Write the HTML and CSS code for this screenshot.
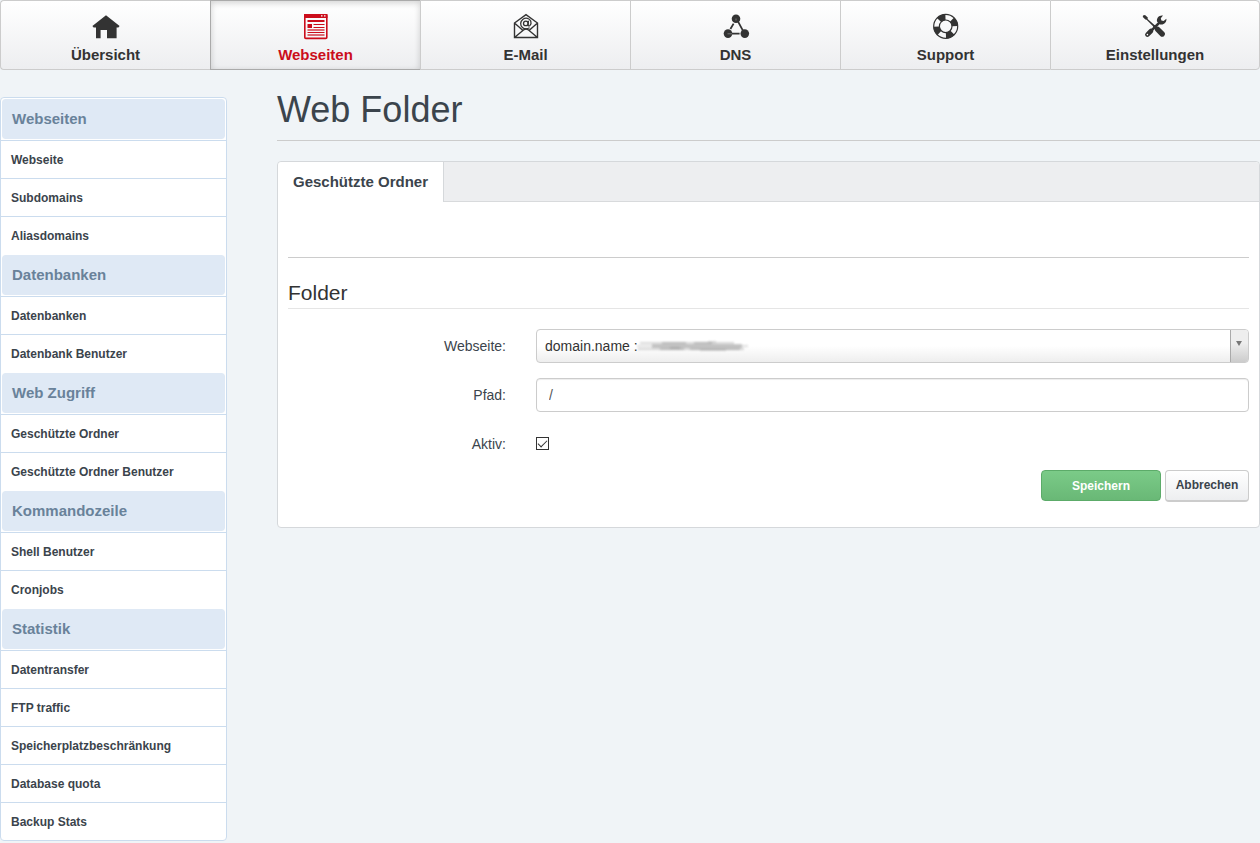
FILE: index.html
```html
<!DOCTYPE html>
<html lang="de">
<head>
    <meta charset="UTF-8">
    <meta name="viewport" content="width=device-width, initial-scale=1.0">
    <title>Web Folder</title>
    <link rel="stylesheet" href="styles.css">
</head>
<body>
    <!-- Main navigation -->
    <nav class="main-nav">
        <a class="nav-item" href="#">
            <svg class="icon" viewBox="0 0 28 28"><path fill="currentColor" d="M14 3.2 27.6 14 26.4 15.4H24.6V26.3H15V18H8.6V26.3H4V15.4H1.6L.4 14Z"/></svg>
            <span>Übersicht</span>
        </a>
        <a class="nav-item active" href="#">
            <svg class="icon" viewBox="0 0 28 28">
                <rect x="2.8" y="2.8" width="22" height="23.6" rx="1" fill="none" stroke="currentColor" stroke-width="1.6"/>
                <path fill="currentColor" d="M2 2H25.5V6H2ZM5.5 8H22.5V10H5.5ZM5.5 12H10V16H5.5ZM11.5 12H22.5V13H11.5ZM11.5 15H22.5V16H11.5ZM5.5 20H22.5V21H5.5Z"/>
                <path fill="currentColor" opacity=".6" d="M5.5 17H22.5V19H5.5ZM5.5 22H22.5V24H5.5Z"/>
                <path fill="#fff" d="M19 3.2H20.5V4.6H19ZM22 3.2H23.5V4.6H22Z"/>
            </svg>
            <span>Webseiten</span>
        </a>
        <a class="nav-item" href="#">
            <svg class="icon" viewBox="0 0 28 28" fill="none" stroke="currentColor">
                <path stroke-width="1.4" d="M2.5 11 14 2.6 25.5 11V25.5H2.5ZM2.5 11 11 18.5M25.5 11 17 18.5M2.5 25.5 11.5 18Q14 16 16.5 18L25.5 25.5"/>
                <circle cx="13.8" cy="11.4" r="2.3" stroke-width="1.3"/>
                <path stroke-width="1.3" d="M16.4 8.8 16 13Q16.4 14.6 18 13.4 19.6 11.8 18.8 9.2C17.6 6 13.6 5.4 11 7.2 8 9.4 8 13.4 10.4 15.4 12.6 17.2 15.6 16.9 17.6 15.8"/>
            </svg>
            <span>E-Mail</span>
        </a>
        <a class="nav-item" href="#">
            <svg class="icon" viewBox="0 0 28 28" fill="currentColor">
                <circle cx="14" cy="6.8" r="4.3"/>
                <circle cx="6" cy="21.6" r="4.3"/>
                <circle cx="22.8" cy="21.6" r="4.3"/>
                <path fill="none" stroke="currentColor" stroke-width="1.8" d="M11.6 11.6 8.4 17M15 7.6 20.8 18.4M8 21.6H17.6"/>
                <path fill="none" stroke="#888" stroke-width=".8" d="M5.5 21.8H10M14 6.5V8.5"/>
            </svg>
            <span>DNS</span>
        </a>
        <a class="nav-item" href="#">
            <svg class="icon" viewBox="0 0 28 28" fill="none" stroke="currentColor">
                <circle cx="13.7" cy="14.3" r="12" stroke-width="1.2"/>
                <circle cx="13.7" cy="14.3" r="6.3" stroke-width="1.2"/>
                <circle cx="13.7" cy="14.3" r="9.2" stroke-width="6" pathLength="80" stroke-dasharray="10 10" stroke-dashoffset="5" transform="rotate(-24 13.7 14.3)"/>
            </svg>
            <span>Support</span>
        </a>
        <a class="nav-item" href="#">
            <svg class="icon" viewBox="0 0 28 28" fill="none" stroke="currentColor" stroke-linecap="round">
                <path fill="currentColor" stroke="none" d="M2 3.4 4 3 6.8 5.6 6.6 7 14 13.6 12.8 15 5.6 7.8 4.4 7.6 1.8 5Z"/>
                <path stroke-width="5.4" d="M16.6 17.4 21.2 22"/>
                <path stroke-width="2.6" d="M13.4 14.4 16 17"/>
                <path stroke-width="4.6" d="M6.4 22.6 10 19"/>
                <path stroke-width="2.6" stroke-linecap="butt" d="M9.6 19.4 19.4 9.6"/>
                <path fill="currentColor" stroke="none" d="M16 9.6C15.4 6 18 3 22 3.6L19.8 6.2 20.4 8.4 22.6 9 25.4 6.8C25.8 10.6 22.8 13.2 19 12.4Z"/>
                <circle cx="6.4" cy="22.6" r=".8" fill="#fff" stroke="none"/>
            </svg>
            <span>Einstellungen</span>
        </a>
    </nav>

    <div class="content">
        <!-- Sidebar -->
        <aside class="sidebar">
            <h2>Webseiten</h2>
            <ul>
                <li><a href="#">Webseite</a></li>
                <li><a href="#">Subdomains</a></li>
                <li><a href="#">Aliasdomains</a></li>
            </ul>
            <h2>Datenbanken</h2>
            <ul>
                <li><a href="#">Datenbanken</a></li>
                <li><a href="#">Datenbank Benutzer</a></li>
            </ul>
            <h2>Web Zugriff</h2>
            <ul>
                <li><a href="#">Geschützte Ordner</a></li>
                <li><a href="#">Geschützte Ordner Benutzer</a></li>
            </ul>
            <h2>Kommandozeile</h2>
            <ul>
                <li><a href="#">Shell Benutzer</a></li>
                <li><a href="#">Cronjobs</a></li>
            </ul>
            <h2>Statistik</h2>
            <ul>
                <li><a href="#">Datentransfer</a></li>
                <li><a href="#">FTP traffic</a></li>
                <li><a href="#">Speicherplatzbeschränkung</a></li>
                <li><a href="#">Database quota</a></li>
                <li><a href="#">Backup Stats</a></li>
            </ul>
        </aside>

        <!-- Page -->
        <main class="page">
            <h1>Web Folder</h1>
            <div class="panel">
                <div class="tabs">
                    <a class="tab" href="#">Geschützte Ordner</a>
                </div>
                <form class="form">
                    <h3>Folder</h3>
                    <div class="form-row">
                        <label for="website">Webseite:</label>
                        <div class="select">
                            <select id="website">
                                <option>domain.name :</option>
                            </select>
                            <svg class="smudge" viewBox="0 0 112 14" fill="none" stroke="#666">
                                <path opacity=".25" stroke-width="2" d="M4 4H98M2 10H108"/>
                                <path opacity=".3" stroke-width="4" d="M16 7H106"/>
                                <path opacity=".3" stroke-width="2" d="M26 4H50M58 4H76M24 10H48M54 10H104"/>
                                <path opacity=".4" d="M1 7H112M34 9H44M64 11H90M72 3H80"/>
                            </svg>
                        </div>
                    </div>
                    <div class="form-row">
                        <label for="path">Pfad:</label>
                        <input class="text-input" type="text" id="path" value="/">
                    </div>
                    <div class="form-row">
                        <label for="enabled">Aktiv:</label>
                        <input class="checkbox" type="checkbox" id="enabled" checked>
                    </div>
                    <div class="buttons">
                        <button class="button save" type="button">Speichern</button>
                        <button class="button cancel" type="button">Abbrechen</button>
                    </div>
                </form>
            </div>
        </main>
    </div>
</body>
</html>
```
FILE: styles.css
```css
*, *::before, *::after { margin: 0; padding: 0; box-sizing: border-box; }
body {
    font-family: "Liberation Sans", Arial, sans-serif;
    font-size: 14px;
    line-height: 20px;
    color: #3b444c;
    background: #f0f4f7;
}
a { color: inherit; text-decoration: none; }
ul { list-style: none; }

/* Main navigation */
.main-nav { display: grid; grid-template-columns: repeat(6, 1fr); }
.nav-item {
    display: flex;
    flex-direction: column;
    align-items: center;
    gap: 5px;
    padding: 11px 0 4px;
    border: 1px solid #ccc;
    border-right: none;
    background: linear-gradient(to bottom, #fff, #edeef0);
    color: #333;
    font-size: 15px;
    font-weight: bold;
}
.nav-item:first-child { border-radius: 4px 0 0 4px; }
.nav-item:last-child { border-right: 1px solid #ccc; border-radius: 0 4px 4px 0; }
.nav-item.active {
    color: #cb0d1b;
    border-color: #aaa;
    box-shadow: inset 0 2px 6px rgba(0,0,0,0.18);
}
.icon { width: 28px; height: 28px; }

.content { display: flex; align-items: flex-start; gap: 50px; }

/* Sidebar */
.sidebar {
    flex: 0 0 227px;
    margin-top: 27px;
    background: #fff;
    border: 1px solid #cbdcee;
    border-radius: 4px;
}
.sidebar h2 {
    padding: 10px;
    border: 1px solid #fff;
    border-radius: 4px;
    background: #dfe9f5;
    background-clip: padding-box;
    color: #69829a;
    font-size: 15px;
    line-height: 20px;
}
.sidebar ul { border-top: 1px solid #cbdcee; }
.sidebar li + li { border-top: 1px solid #cbdcee; }
.sidebar li a {
    display: block;
    padding: 11px 10px 9px;
    font-size: 12px;
    font-weight: bold;
    line-height: 17px;
}

/* Page */
.page { flex: 1; margin-top: 20px; }
.page h1 {
    padding-bottom: 10px;
    margin-bottom: 20px;
    border-bottom: 1px solid #ccc;
    font-size: 36px;
    font-weight: normal;
    line-height: 40px;
}
.panel {
    background: #fff;
    border: 1px solid #d5d8db;
    border-radius: 4px;
}
.tabs {
    display: flex;
    background: #edeef0;
    border-radius: 4px 4px 0 0;
    box-shadow: inset 0 -1px 0 #d8dadc;
}
.tab {
    padding: 10px 15px;
    background: #fff;
    border-right: 1px solid #d5d8db;
    border-radius: 4px 0 0 0;
    font-size: 15px;
    font-weight: bold;
}
.form { padding: 55px 10px 25px; }
.form h3 {
    padding-top: 20px;
    margin-bottom: 20px;
    border-top: 1px solid #ccc;
    border-bottom: 1px solid #e5e5e5;
    color: #333;
    font-size: 21px;
    font-weight: normal;
    line-height: 30px;
}
.form-row {
    display: grid;
    grid-template-columns: 218px 1fr;
    column-gap: 30px;
    align-items: center;
    min-height: 34px;
    margin-bottom: 15px;
}
.form-row label { text-align: right; }

.select { position: relative; }
.select select {
    appearance: none;
    display: block;
    width: 100%;
    height: 34px;
    padding: 0 26px 0 8px;
    border: 1px solid #ccc;
    border-radius: 4px;
    background: linear-gradient(to bottom, #fff 50%, #eee);
    color: #333;
    font: inherit;
}
.select::before {
    content: "";
    position: absolute;
    top: 1px;
    right: 1px;
    bottom: 1px;
    width: 18px;
    border-left: 1px solid #aaa;
    border-radius: 0 3px 3px 0;
    background: linear-gradient(to bottom, #eee 40%, #ccc);
    pointer-events: none;
}
.select::after {
    content: "";
    position: absolute;
    top: 12px;
    right: 7px;
    border: 3px solid transparent;
    border-top: 5px solid #777;
    border-bottom: none;
    pointer-events: none;
}
.smudge {
    position: absolute;
    top: 10px;
    left: 100px;
    width: 112px;
    height: 14px;
    filter: blur(1px);
    pointer-events: none;
}
.text-input {
    width: 100%;
    height: 34px;
    padding: 6px 12px;
    border: 1px solid #ccc;
    border-radius: 4px;
    box-shadow: inset 0 1px 1px rgba(0,0,0,0.075);
    background: #fff;
    color: #555;
    font: inherit;
}
.checkbox {
    appearance: none;
    position: relative;
    width: 13px;
    height: 13px;
    margin-bottom: 1px;
    border: 1px solid #333;
    background: #fff;
}
.checkbox:checked::after {
    content: "";
    position: absolute;
    top: 2px;
    left: 1px;
    width: 9px;
    height: 5px;
    border: solid #333;
    border-width: 0 0 1px 1px;
    transform: rotate(-45deg);
}

.buttons {
    display: flex;
    justify-content: flex-end;
    align-items: flex-start;
    gap: 4px;
    margin-top: -6px;
}
.button {
    min-width: 84px;
    padding: 6px 9px;
    border: 1px solid #ccc;
    border-radius: 4px;
    font-family: inherit;
    font-size: 12px;
    font-weight: bold;
    line-height: 17px;
    cursor: pointer;
}
.button.save {
    min-width: 120px;
    padding: 7px 9px 5px;
    border-color: #5cab69;
    background: linear-gradient(to bottom, #7bcb88, #69b876);
    color: #fff;
}
.button.cancel {
    border-bottom-width: 2px;
    background: linear-gradient(to bottom, #fff, #edeef0);
    color: #3b444c;
}
```
